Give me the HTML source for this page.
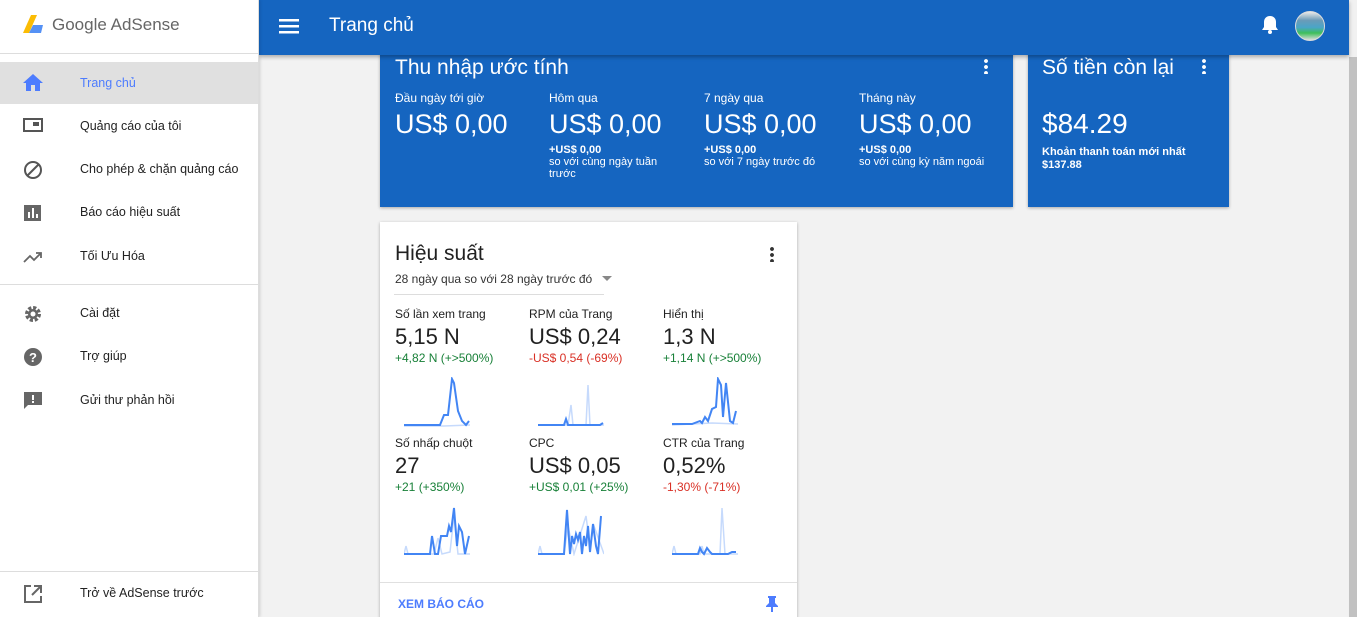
<!DOCTYPE html>
<html><head><meta charset="utf-8"><style>
*{box-sizing:border-box;margin:0;padding:0}
html,body{width:1357px;height:617px;overflow:hidden}
body{background:#f2f2f2;font-family:"Liberation Sans",Roboto,sans-serif;position:relative;color:#212121}
.side{position:absolute;left:0;top:0;width:259px;height:617px;background:#fff;border-right:1px solid #ddd;box-shadow:1px 0 3px rgba(0,0,0,.15);z-index:3}
.logo{height:54px;border-bottom:1px solid #ddd;position:relative}
.logo span{position:absolute;left:52px;top:15px;font-size:17px;color:#666}
.item{position:absolute;left:0;width:258px;height:42px;font-size:12.5px;color:#222}
.item .t{position:absolute;left:80px;top:14px}
.item svg{position:absolute;left:23px;top:12px}
.hr{position:absolute;left:0;width:258px;height:1px;background:#ddd}
.top{position:absolute;left:259px;top:0;width:1090px;height:55px;background:#1565c0;box-shadow:0 2px 4px rgba(0,0,0,.3);z-index:2;color:#fff}
.scroll{position:absolute;left:1348px;top:0;width:9px;height:617px;background:#f1f1f1}
.scroll div{position:absolute;left:1px;top:57px;width:8px;height:560px;background:#c1c1c1}
.card{position:absolute;box-shadow:0 1px 3px rgba(0,0,0,.3)}
.blue{background:#1565c0;color:#fff}
.col{position:absolute;top:40px;font-size:12px}
.col .v{font-size:27px;margin-top:3px;line-height:32px}
.col .s{font-size:11px;line-height:12px;margin-top:4px;font-weight:bold}
.col .s span{font-weight:normal}
.m{position:absolute;font-size:12px}
.m .v{font-size:22px;margin-top:4px;line-height:24px}
.m .d{font-size:12px;margin-top:2px}
.g{color:#188038}.r{color:#d93025}
.m svg{display:block;margin-top:12px;margin-left:9px}
</style></head><body>
<div class="side">
 <div class="logo">
  <svg width="22" height="20" viewBox="0 0 22 20" style="position:absolute;left:23px;top:15px"><polygon points="8,0 14,0 6,18 0,18" fill="#fbbc04"/><polygon points="10,10 20,10 18,18 6,18" fill="#4285f4" opacity=".9"/></svg>
  <span>Google AdSense</span>
 </div>
 <div class="item" style="top:62px;background:#e0e0e0"><svg width="20" height="18" viewBox="0 0 20 18"><path d="M8 17v-6h4v6h5V9h3L10 0 0 9h3v8z" fill="#4d7cfe"/></svg><span class="t" style="color:#4d7cfe">Trang chủ</span></div>
 <div class="item" style="top:105px"><svg width="20" height="18" viewBox="0 0 20 18"><rect x="1" y="2" width="18" height="12" fill="none" stroke="#555" stroke-width="2"/><rect x="10" y="5" width="6" height="4" fill="#555"/></svg><span class="t">Quảng cáo của tôi</span></div>
 <div class="item" style="top:148px"><svg width="20" height="20" viewBox="0 0 20 20"><circle cx="10" cy="10" r="8" fill="none" stroke="#555" stroke-width="2"/><line x1="4" y1="16" x2="16" y2="4" stroke="#555" stroke-width="2"/></svg><span class="t">Cho phép &amp; chặn quảng cáo</span></div>
 <div class="item" style="top:191px"><svg width="20" height="20" viewBox="0 0 20 20"><rect x="1" y="2" width="17" height="16" fill="#666"/><rect x="5" y="9" width="2" height="6" fill="#fff"/><rect x="9" y="5" width="2" height="10" fill="#fff"/><rect x="13" y="11" width="2" height="4" fill="#fff"/></svg><span class="t">Báo cáo hiệu suất</span></div>
 <div class="item" style="top:235px"><svg width="20" height="20" viewBox="0 0 20 20"><polyline points="1,15 7,9 11,13 18,6" fill="none" stroke="#666" stroke-width="1.8"/><polyline points="13,6 18,6 18,11" fill="none" stroke="#666" stroke-width="1.8"/></svg><span class="t">Tối Ưu Hóa</span></div>
 <div class="hr" style="top:284px"></div>
 <div class="item" style="top:292px"><svg width="20" height="20" viewBox="0 0 20 20"><circle cx="10" cy="10" r="6" fill="none" stroke="#666" stroke-width="4" stroke-dasharray="3 1.7"/><circle cx="10" cy="10" r="5" fill="#666"/><circle cx="10" cy="10" r="2.5" fill="#fff"/></svg><span class="t">Cài đặt</span></div>
 <div class="item" style="top:335px"><svg width="20" height="20" viewBox="0 0 20 20"><circle cx="10" cy="10" r="9" fill="#666"/><text x="10" y="15" text-anchor="middle" font-size="13" font-weight="bold" fill="#fff" font-family="Liberation Sans">?</text></svg><span class="t">Trợ giúp</span></div>
 <div class="item" style="top:379px"><svg width="20" height="20" viewBox="0 0 20 20"><path d="M1 1h18v13H5l-4 4z" fill="#666"/><rect x="9" y="4" width="2" height="5" fill="#fff"/><rect x="9" y="10" width="2" height="2" fill="#fff"/></svg><span class="t">Gửi thư phản hồi</span></div>
 <div class="hr" style="top:571px"></div>
 <div class="item" style="top:572px"><svg width="20" height="20" viewBox="0 0 20 20"><path d="M8 2H2v16h16v-6" fill="none" stroke="#666" stroke-width="2"/><path d="M11 2h7v7M18 2l-9 9" fill="none" stroke="#666" stroke-width="2"/></svg><span class="t">Trở về AdSense trước</span></div>
</div>
<div class="top">
 <svg width="20" height="16" viewBox="0 0 20 16" style="position:absolute;left:20px;top:18px"><rect y="1" width="20" height="2.5" fill="#fff"/><rect y="7" width="20" height="2.5" fill="#fff"/><rect y="13" width="20" height="2.5" fill="#fff"/></svg>
 <div style="position:absolute;left:70px;top:15px;font-size:19px">Trang chủ</div>
 <svg width="18" height="20" viewBox="0 0 18 20" style="position:absolute;left:1002px;top:15px"><path d="M9 1c-4 0-6 3-6 6v5l-2 3h16l-2-3V7c0-3-2-6-6-6z" fill="#fff"/><circle cx="9" cy="17" r="2" fill="#fff"/></svg>
 <div style="position:absolute;left:1036px;top:11px;width:30px;height:30px;border-radius:50%;background:linear-gradient(#e8e8e8 0,#6a9bb8 30%,#4aa5c8 55%,#3fbf5a 75%,#ddd 100%);border:1px solid #ddd"></div>
</div>
<div class="scroll"><div></div></div>

<div class="card blue" style="left:380px;top:45px;width:633px;height:162px">
 <div style="position:absolute;left:15px;top:11px;font-size:21px">Thu nhập ước tính</div>
 <div style="position:absolute;left:604px;top:13px;width:4px;height:16px;background:radial-gradient(circle,#fff 1.8px,transparent 2px) 0 0/4px 6px"></div>
 <div class="col" style="left:15px;top:46px">Đầu ngày tới giờ<div class="v">US$ 0,00</div></div>
 <div class="col" style="left:169px;top:46px">Hôm qua<div class="v">US$ 0,00</div><div class="s">+US$ 0,00<br><span>so với cùng ngày tuần<br>trước</span></div></div>
 <div class="col" style="left:324px;top:46px">7 ngày qua<div class="v">US$ 0,00</div><div class="s">+US$ 0,00<br><span>so với 7 ngày trước đó</span></div></div>
 <div class="col" style="left:479px;top:46px">Tháng này<div class="v">US$ 0,00</div><div class="s">+US$ 0,00<br><span>so với cùng kỳ năm ngoái</span></div></div>
</div>
<div class="card blue" style="left:1028px;top:45px;width:201px;height:162px">
 <div style="position:absolute;left:14px;top:11px;font-size:21px">Số tiền còn lại</div>
 <div style="position:absolute;left:174px;top:13px;width:4px;height:16px;background:radial-gradient(circle,#fff 1.8px,transparent 2px) 0 0/4px 6px"></div>
 <div style="position:absolute;left:14px;top:63px;font-size:28px">$84.29</div>
 <div style="position:absolute;left:14px;top:101px;font-size:11px;line-height:13px;font-weight:bold">Khoản thanh toán mới nhất<br>$137.88</div>
</div>

<div class="card" style="left:380px;top:222px;width:417px;height:400px;background:#fff">
 <div style="position:absolute;left:15px;top:20px;font-size:21px">Hiệu suất</div>
 <div style="position:absolute;left:390px;top:24px;width:4px;height:16px;background:radial-gradient(circle,#333 1.8px,transparent 2px) 0 0/4px 6px"></div>
 <div style="position:absolute;left:15px;top:50px;font-size:12px;color:#333">28 ngày qua so với 28 ngày trước đó <span style="display:inline-block;margin-left:6px;border:5px solid transparent;border-top-color:#888;vertical-align:-3px"></span></div>
 <div style="position:absolute;left:14px;top:72px;width:210px;height:1px;background:#ddd"></div>
 <div class="m" style="left:15px;top:85px">Số lần xem trang<div class="v">5,15 N</div><div class="d g">+4,82 N (+&gt;500%)</div>
  <svg width="66" height="50" viewBox="0 0 66 50"><polyline points="0,49 40,49 66,48" fill="none" stroke="#c6dafc" stroke-width="1.5"/><polyline points="0,48 36,48 40,38 44,38 48,2 50,6 54,34 58,44 62,48 65,44" fill="none" stroke="#4285f4" stroke-width="2"/></svg></div>
 <div class="m" style="left:149px;top:85px">RPM của Trang<div class="v">US$ 0,24</div><div class="d r">-US$ 0,54 (-69%)</div>
  <svg width="66" height="50" viewBox="0 0 66 50"><polyline points="0,48 30,48 33,28 35,48 48,48 50,8 52,48 66,48" fill="none" stroke="#c6dafc" stroke-width="1.5"/><polyline points="0,48 26,48 28,42 30,48 62,48 65,46" fill="none" stroke="#4285f4" stroke-width="2"/></svg></div>
 <div class="m" style="left:283px;top:85px">Hiển thị<div class="v">1,3 N</div><div class="d g">+1,14 N (+&gt;500%)</div>
  <svg width="66" height="50" viewBox="0 0 66 50"><polyline points="0,48 40,46 66,47" fill="none" stroke="#c6dafc" stroke-width="1.5"/><polyline points="0,47 20,47 28,44 30,46 33,40 36,44 40,32 44,30 46,2 49,8 51,40 54,6 58,44 61,46 64,34" fill="none" stroke="#4285f4" stroke-width="2"/></svg></div>
 <div class="m" style="left:15px;top:214px">Số nhấp chuột<div class="v">27</div><div class="d g">+21 (+350%)</div>
  <svg width="66" height="50" viewBox="0 0 66 50"><polyline points="0,48 2,40 4,48 30,48 34,32 38,48 46,46 50,10 54,48 66,48" fill="none" stroke="#c6dafc" stroke-width="1.5"/><polyline points="0,48 26,48 28,30 31,48 34,48 37,30 43,30 45,20 47,26 50,2 53,40 55,20 58,26 61,48 65,30" fill="none" stroke="#4285f4" stroke-width="2"/></svg></div>
 <div class="m" style="left:149px;top:214px">CPC<div class="v">US$ 0,05</div><div class="d g">+US$ 0,01 (+25%)</div>
  <svg width="66" height="50" viewBox="0 0 66 50"><polyline points="0,48 2,40 4,48 26,48 30,20 36,48 48,10 52,40 56,20 66,48" fill="none" stroke="#c6dafc" stroke-width="1.5"/><polyline points="0,48 26,48 29,4 32,48 34,30 36,38 38,28 40,34 42,26 44,48 46,30 48,40 50,20 52,46 55,18 58,40 60,48 63,10" fill="none" stroke="#4285f4" stroke-width="2"/></svg></div>
 <div class="m" style="left:283px;top:214px">CTR của Trang<div class="v">0,52%</div><div class="d r">-1,30% (-71%)</div>
  <svg width="66" height="50" viewBox="0 0 66 50"><polyline points="0,48 2,40 4,48 28,48 30,40 32,48 48,48 50,2 53,48 66,48" fill="none" stroke="#c6dafc" stroke-width="1.5"/><polyline points="0,48 26,48 28,42 30,46 32,48 35,42 38,46 40,48 56,48 60,46 64,46" fill="none" stroke="#4285f4" stroke-width="2"/></svg></div>
 <div style="position:absolute;left:0;top:360px;width:417px;height:1px;background:#e0e0e0"></div>
 <div style="position:absolute;left:18px;top:375px;font-size:12px;font-weight:bold;color:#4d7cfe">XEM BÁO CÁO</div>
 <svg width="12" height="16" viewBox="0 0 12 16" style="position:absolute;left:386px;top:374px"><path d="M2 0h8v2H9v5l3 3v1H7v5H5v-5H0v-1l3-3V2H2z" fill="#4d7cfe"/></svg>
</div>
</body></html>
